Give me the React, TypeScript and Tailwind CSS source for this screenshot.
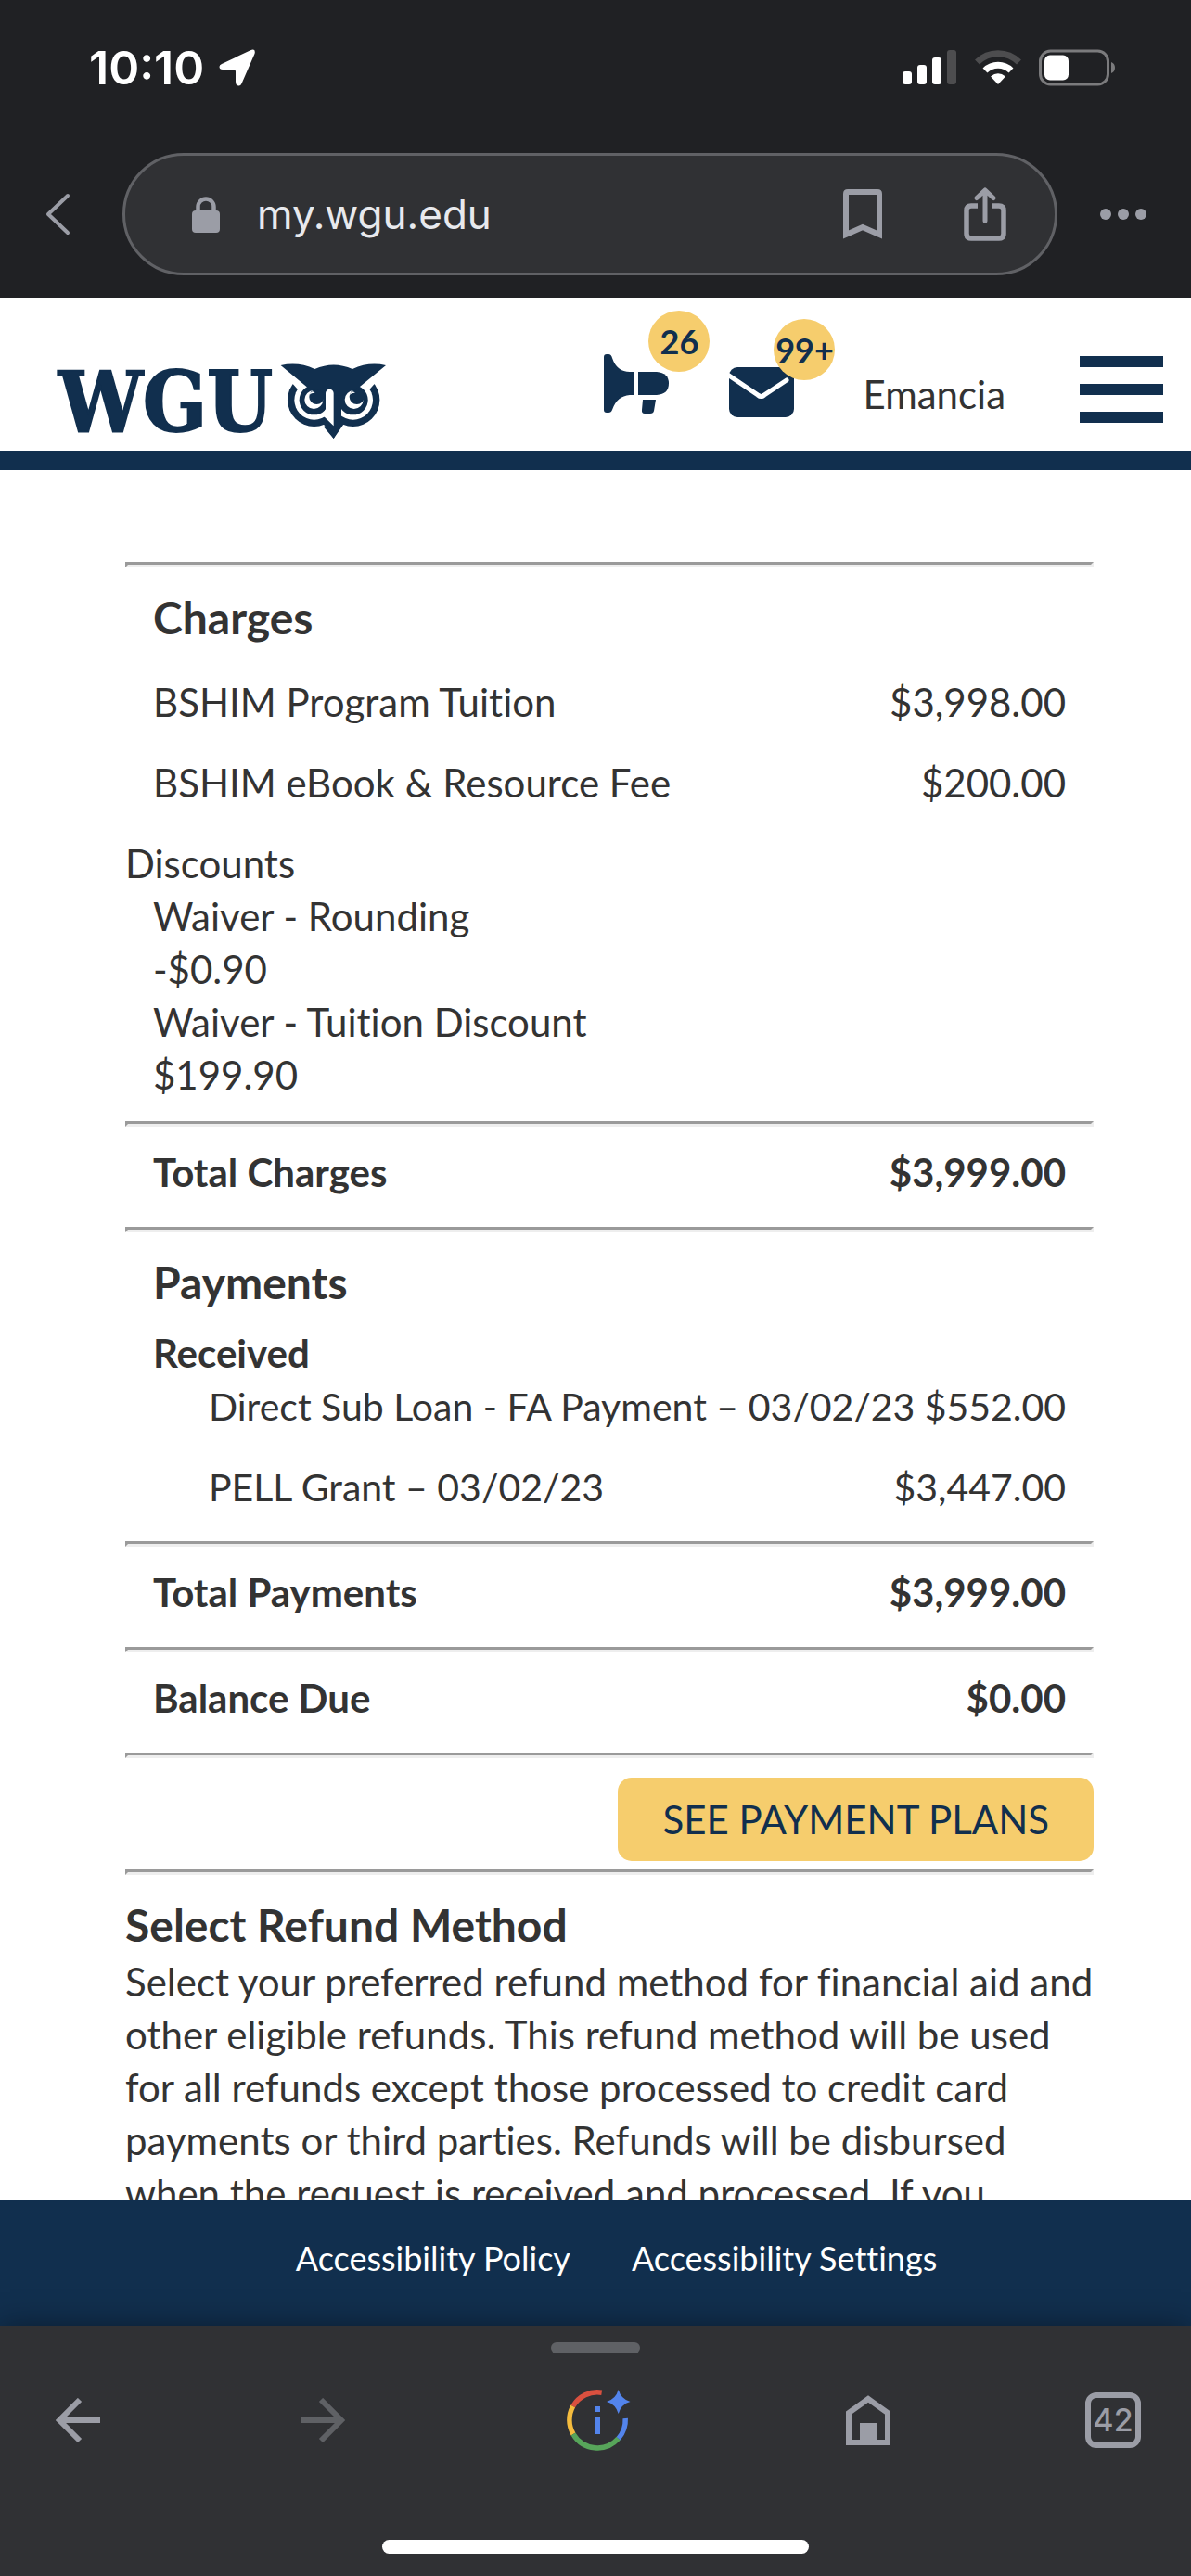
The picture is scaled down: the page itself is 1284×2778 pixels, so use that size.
import type { ReactNode } from "react";

const charges = [
  { label: "BSHIM Program Tuition", amount: "$3,998.00" },
  { label: "BSHIM eBook & Resource Fee", amount: "$200.00" },
];

const discounts = [
  { label: "Waiver - Rounding", amount: "-$0.90" },
  { label: "Waiver - Tuition Discount", amount: "$199.90" },
];

const payments = [
  { label: "Direct Sub Loan - FA Payment – 03/02/23", amount: "$552.00" },
  { label: "PELL Grant – 03/02/23", amount: "$3,447.00" },
];

const Divider = () => <hr className="h-0 border-3 border-[#eee] [border-style:inset]" />;

const SectionTitle = ({ children }: { children: ReactNode }) => (
  <h2 className="mt-[21px] text-[48px] leading-[66px] font-bold">{children}</h2>
);

const Row = ({ label, amount }: { label: string; amount: string }) => (
  <div className="flex justify-between mb-[30px]">
    <dt>{label}</dt>
    <dd>{amount}</dd>
  </div>
);

const TotalRow = ({ label, amount }: { label: string; amount: string }) => (
  <dl className="mt-[21px] px-[30px] font-bold">
    <Row label={label} amount={amount} />
  </dl>
);

const StatusBar = () => (
  <div className="flex items-center justify-between pt-[51px] pl-24 pr-20">
    <div className="flex items-center gap-4">
      <span className="text-[50px] leading-[44px] font-semibold text-white">10:10</span>
      <svg width="40" height="40" viewBox="0 0 40 40" fill="#fff" aria-hidden="true">
        <path d="M3 16 34 1.200Q40-1 38.500 5L25 36Q23.500 40 21 39.500 18 39 18 35V24Q18 22 16 22H4Q.5 22 .5 19 .5 17 3 16Z" />
      </svg>
    </div>
    <div className="flex items-center gap-[18px]">
      <svg width="59" height="38" viewBox="0 0 59 38" fill="#fff" aria-hidden="true">
        <rect x="0" y="23" width="10" height="14" rx="3" />
        <rect x="16" y="16" width="10" height="21" rx="3" />
        <rect x="32" y="8" width="10" height="29" rx="3" />
        <rect x="48" y="0" width="10" height="37" rx="3" fill="#4d4d4f" />
      </svg>
      <svg width="52" height="38" viewBox="0 0 52 38" aria-hidden="true">
        <path d="M3.500 13A32 32 0 0 1 48.500 13" fill="none" stroke="#4d4d4f" strokeWidth="7" />
        <path d="M12 22A20 20 0 0 1 40 22" fill="none" stroke="#fff" strokeWidth="7" />
        <path d="M26 37 18 28.500Q26 22 34 28.500Z" fill="#fff" />
      </svg>
      <svg width="84" height="40" viewBox="0 0 84 40" aria-hidden="true">
        <rect x="1.500" y="2" width="73" height="36" rx="11" fill="none" stroke="#7b7b7d" strokeWidth="3" />
        <rect x="6" y="6.500" width="26" height="27" rx="6" fill="#fff" />
        <path d="M78 14Q82 15.500 82 20T78 26Z" fill="#7b7b7d" />
      </svg>
    </div>
  </div>
);

const AddressBar = () => (
  <div className="flex items-center mt-[70px] px-12 pb-6">
    <button type="button" aria-label="Back" className="shrink-0">
      <svg width="28" height="46" viewBox="0 0 28 46" fill="none" stroke="#9b9da6" strokeWidth="4" strokeLinecap="round" strokeLinejoin="round">
        <path d="M25 3 4 23 25 43" />
      </svg>
    </button>
    <div className="flex flex-1 min-w-0 items-center h-[132px] ml-14 mr-[46px] pl-[72px] pr-[52px] rounded-full border-3 border-[#606165] bg-[#303134]">
      <svg width="30" height="39" viewBox="0 0 30 39" className="shrink-0" aria-hidden="true">
        <rect x="0" y="15" width="30" height="24" rx="4" fill="#9b9da6" />
        <path d="M6.500 17V11A8.500 8.500 0 0 1 23.500 11V17" fill="none" stroke="#9b9da6" strokeWidth="4.500" />
      </svg>
      <input
        type="text"
        aria-label="Address"
        defaultValue="my.wgu.edu"
        className="flex-1 min-w-0 ml-10 bg-transparent text-[44px] leading-[60px] text-[#e8e9ed] outline-none"
      />
      <button type="button" aria-label="Bookmark" className="shrink-0">
        <svg width="42" height="54" viewBox="0 0 42 54" fill="none" stroke="#9b9da6" strokeWidth="6">
          <path d="M3 49V5Q3 3 5 3H37Q39 3 39 5V49L21 41Z" />
        </svg>
      </button>
      <button type="button" aria-label="Share" className="shrink-0 ml-[88px]">
        <svg width="46" height="58" viewBox="0 0 46 58" fill="none" stroke="#9b9da6" strokeWidth="5.500">
          <path d="M15 20H8Q3 20 3 25V50Q3 55 8 55H38Q43 55 43 50V25Q43 20 38 20H31" />
          <path d="M23 36V4M14 11.500 23 3 32 11.500" strokeWidth="5" strokeLinecap="round" strokeLinejoin="round" />
        </svg>
      </button>
    </div>
    <button type="button" aria-label="More" className="shrink-0">
      <svg width="50" height="12" viewBox="0 0 50 12" fill="#9b9da6">
        <circle cx="6" cy="6" r="6" />
        <circle cx="25" cy="6" r="6" />
        <circle cx="44" cy="6" r="6" />
      </svg>
    </button>
  </div>
);

const OwlIcon = () => (
  <svg width="115" height="82" viewBox="36 66 345 246" fill="#112f4e" aria-hidden="true">
    <circle cx="146" cy="184" r="86" />
    <circle cx="272" cy="184" r="86" />
    <path d="M160 262 175 260 209 309 243 260 258 262 209 200Z" />
    <g fill="#fff">
      <circle cx="146" cy="184" r="64" />
      <circle cx="272" cy="184" r="64" />
      <path d="M50 60V118L77 132 93 150 125 150H293L325 150 341 132 368 118V60Z" />
    </g>
    <path d="M175 130H234V262L209 309 176 270 209 262Z" />
    <circle cx="146" cy="184" r="48" />
    <circle cx="272" cy="184" r="48" />
    <path d="M38 72Q95 59 148 84 209 57 270 84 323 59 378 72L293 142 234 170H184L125 144Z" />
    <g fill="#fff">
      <circle cx="145" cy="183" r="30" />
      <circle cx="275" cy="183" r="30" />
      <path d="M183 162A13 13 0 0 1 209 162V268L178 238 168 242 183 214Z" />
    </g>
    <circle cx="154" cy="174" r="24" />
    <circle cx="284" cy="174" r="24" />
    <path d="M139 157Q133 160 130 168 138 160 149 161Q143 157 139 157ZM269 157Q263 160 260 168 268 160 279 161 273 157 269 157Z" fill="#fff" />
  </svg>
);

const Badge = ({ children, className }: { children: ReactNode; className: string }) => (
  <span
    className={`absolute flex items-center justify-center size-[66px] rounded-full bg-[#f6cd6d] text-[36px] leading-none font-bold text-[#112f4e] ${className}`}
  >
    {children}
  </span>
);

const SiteHeader = () => (
  <header className="flex shrink-0 h-[186px] items-end border-b-[21px] border-[#112f4e] bg-white pl-[63px] pr-[30px] font-[Lato,sans-serif]">
    <a href="#home" aria-label="WGU home" className="flex items-center gap-2 mb-3">
      <span className="font-['DejaVu_Serif_Condensed','DejaVu_Serif',serif] text-[90px] leading-[82px] font-bold text-[#112f4e] [-webkit-text-stroke:2px_#112f4e]">
        WGU
      </span>
      <OwlIcon />
    </a>
    <button type="button" aria-label="Announcements" className="relative ml-auto mb-10">
      <svg width="70" height="64" viewBox="0 0 70 64" fill="#112f4e">
        <path d="M0 3Q0 0 3 0H5Q8 0 9 4 14 19 28 19H32V44H28Q14 45 9 60 8 63 5 63H3Q0 63 0 60Z" />
        <path d="M37 19H57Q70 20 70 31.500T57 44H37Z" />
        <path d="M42 49H56L54 61Q53.500 64 50 64H44Q40.500 64 41 60Z" />
      </svg>
      <Badge className="-top-[47px] left-12">26</Badge>
    </button>
    <button type="button" aria-label="Messages" className="relative ml-[65px] mb-9">
      <svg width="70" height="54" viewBox="0 0 70 54">
        <rect width="70" height="54" rx="9" fill="#112f4e" />
        <path d="M-3 7 31 30Q34.500 33 38 30L62 14" fill="none" stroke="#fff" strokeWidth="5" strokeLinecap="round" />
      </svg>
      <Badge className="-top-[52px] left-12">99+</Badge>
    </button>
    <a href="#profile" className="ml-[74px] mb-8 text-[42px] leading-[57px] text-[#333]">Emancia</a>
    <button type="button" aria-label="Menu" className="flex flex-col gap-[18px] ml-20 mb-[30px]">
      <span className="h-3 w-[90px] bg-[#112f4e]" />
      <span className="h-3 w-[90px] bg-[#112f4e]" />
      <span className="h-3 w-[90px] bg-[#112f4e]" />
    </button>
  </header>
);

const Statement = () => (
  <main className="grow min-h-0 overflow-hidden bg-white pt-[99px] pl-[135px] pr-[105px] font-[Lato,sans-serif] text-[42px] leading-[57px] text-[#333] [font-variant-ligatures:none]">
    <Divider />
    <section className="px-[30px]">
      <SectionTitle>Charges</SectionTitle>
      <dl className="mt-[30px]">
        {charges.map((c) => (
          <Row key={c.label} {...c} />
        ))}
      </dl>
    </section>
    <section className="mb-[21px]">
      <h3>Discounts</h3>
      <dl className="px-[30px]">
        {discounts.map((d) => (
          <div key={d.label}>
            <dt>{d.label}</dt>
            <dd>{d.amount}</dd>
          </div>
        ))}
      </dl>
    </section>
    <Divider />
    <TotalRow label="Total Charges" amount="$3,999.00" />
    <Divider />
    <section className="px-[30px]">
      <SectionTitle>Payments</SectionTitle>
      <h3 className="mt-[15px] font-bold">Received</h3>
      <dl className="pl-[60px] text-[41px] whitespace-nowrap">
        {payments.map((p) => (
          <Row key={p.label} {...p} />
        ))}
      </dl>
    </section>
    <Divider />
    <TotalRow label="Total Payments" amount="$3,999.00" />
    <Divider />
    <TotalRow label="Balance Due" amount="$0.00" />
    <Divider />
    <div className="flex justify-end mt-[21px] mb-[9px]">
      <button type="button" className="h-[90px] px-12 rounded-[15px] bg-[#f6cd6d] text-[#112f4e]">
        SEE PAYMENT PLANS
      </button>
    </div>
    <Divider />
    <section>
      <SectionTitle>Select Refund Method</SectionTitle>
      <p>
        Select your preferred refund method for financial aid and other eligible refunds. This refund method will be
        used for all refunds except those processed to credit card payments or third parties. Refunds will be
        disbursed when the request is received and processed. If you
      </p>
    </section>
  </main>
);

const SiteFooter = () => (
  <footer className="flex shrink-0 h-[135px] items-center justify-center gap-[66px] bg-[#112f4e] pl-[45px] pb-3 font-[Lato,sans-serif] text-[36px] leading-[48px] text-white [font-variant-ligatures:none]">
    <a href="#policy">Accessibility Policy</a>
    <a href="#settings">Accessibility Settings</a>
  </footer>
);

const BrowserToolbar = () => (
  <nav className="relative flex flex-col shrink-0 h-[270px] items-center bg-[#303134] pt-[18px] pb-6 shadow-[0_0_32px_rgba(0,0,0,0.4)]">
    <div className="h-3 w-24 rounded-full bg-[#5f6165]" />
    <div className="flex w-full items-center justify-between mt-[39px] pl-[60px] pr-[54px]">
      <div className="flex items-center gap-[216px]">
        <button type="button" aria-label="Go back">
          <svg width="48" height="48" viewBox="0 0 48 48" fill="none" stroke="#9b9da6" strokeWidth="6">
            <path d="M48 24H6M26 2 4 24 26 46" />
          </svg>
        </button>
        <button type="button" aria-label="Go forward" disabled>
          <svg width="48" height="48" viewBox="0 0 48 48" fill="none" stroke="#5f6165" strokeWidth="6">
            <path d="M0 24H42M22 2 44 24 22 46" />
          </svg>
        </button>
      </div>
      <button type="button" aria-label="About this page">
        <svg width="76" height="66" viewBox="0 0 76 66" fill="none" strokeWidth="5.500">
          <path d="M13.700 18A30.300 30.300 0 0 1 44.700 3.200" stroke="#d9503f" />
          <path d="M14 48A30.300 30.300 0 0 1 13.700 18" stroke="#f5bc3e" />
          <path d="M62.700 52.700A30.300 30.300 0 0 1 14 48" stroke="#57a55a" />
          <path d="M70.200 31A30.300 30.300 0 0 1 62.700 52.700" stroke="#5384ec" />
          <path d="M37 18H43V24H37ZM37 30H43V48H37ZM62.700 0Q65.500 10.200 75.500 13 65.500 15.800 62.700 26 59.900 15.800 50 13 59.900 10.200 62.700 0Z" fill="#5384ec" />
        </svg>
      </button>
      <div className="flex items-center gap-[210px]">
        <button type="button" aria-label="Home">
          <svg width="48" height="54" viewBox="0 0 48 54">
            <path d="M3 51V19L24 4 45 19V51Z" fill="none" stroke="#9b9da6" strokeWidth="6" />
            <path d="M15 30H33V51H15Z" fill="#9b9da6" />
          </svg>
        </button>
        <button
          type="button"
          aria-label="42 open tabs"
          className="size-[60px] rounded-xl border-6 border-[#9b9da6] text-[34px] leading-none font-medium text-[#9b9da6]"
        >
          42
        </button>
      </div>
    </div>
    <div className="mt-auto h-[15px] w-[460px] rounded-full bg-white" />
  </nav>
);

const App = () => (
  <div className="flex flex-col h-screen bg-[#202124] font-[Inter,sans-serif]">
    <div className="h-[321px] shrink-0">
      <StatusBar />
      <AddressBar />
    </div>
    <SiteHeader />
    <Statement />
    <SiteFooter />
    <BrowserToolbar />
  </div>
);

export default App;
